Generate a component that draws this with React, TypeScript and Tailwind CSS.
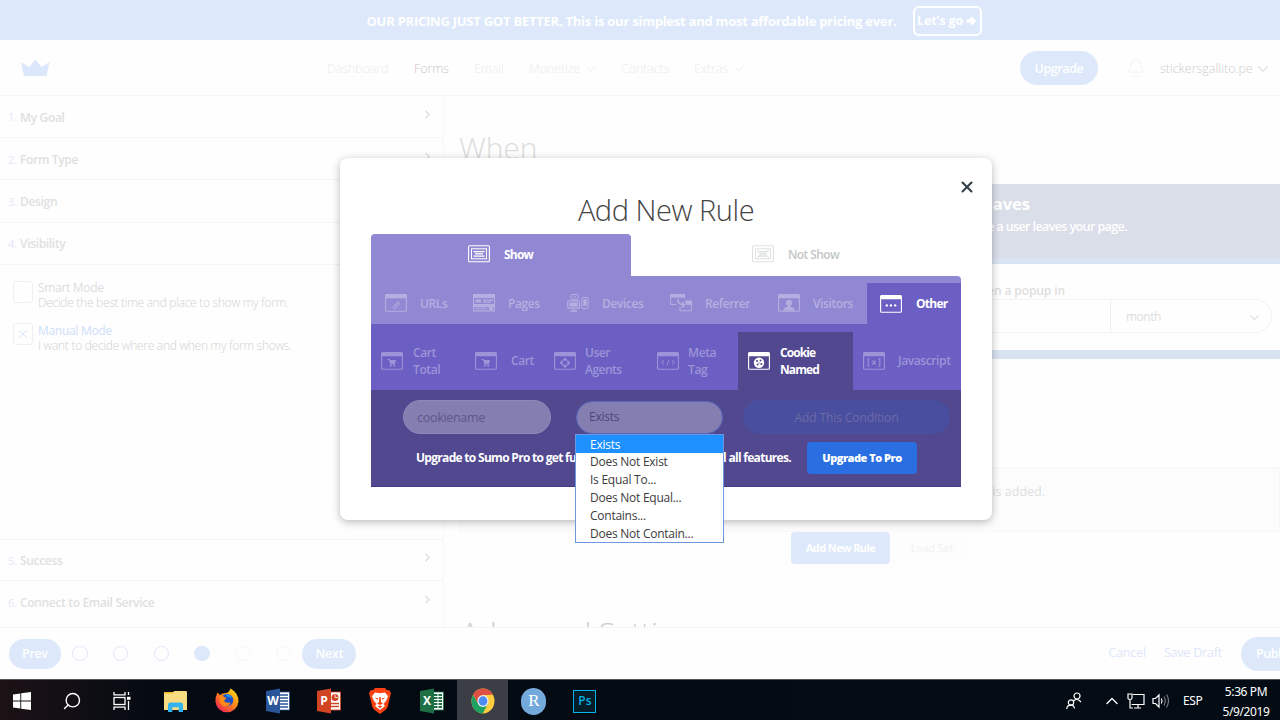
import React from "react";
import { ArrowBigRight, Bell, ChevronDown, ChevronRight, ChevronUp, Search, X } from "lucide-react";

type GlyphName = "link" | "cart" | "target" | "code" | "cookie" | "brackets" | "dots" | "person";

function Glyph({ name }: { name: GlyphName }) {
  switch (name) {
    case "link":
      return <path d="M8.5 12.5 L12 8.5 Q13.5 7 14.5 8.5 Q15 9.5 13.5 11 L11 14 Q9.5 15.5 8.5 14.2 Q7.8 13.4 8.5 12.5 M10 12.5 L13 9" fill="none" stroke="currentColor" strokeWidth=".9" />;
    case "cart":
      return (
        <g fill="currentColor">
          <path d="M6.5 7 H8.6 L9 8 H15 L14 12.2 H9.3 L8 8 H6.5 Z" />
          <circle cx="9.8" cy="13.6" r="1.1" />
          <circle cx="13.2" cy="13.6" r="1.1" />
        </g>
      );
    case "target":
      return (
        <g fill="currentColor">
          <path d="M8.4 8.2 L11 5.4 L13.6 8.2 L12.4 8.8 Q11 8 9.6 8.8 Z M8.4 13.2 L11 16 L13.6 13.2 L12.4 12.6 Q11 13.4 9.6 12.6 Z M8.2 8.2 L5.6 10.7 L8.2 13.2 L8.9 12 Q8.2 10.7 8.9 9.4 Z M13.8 8.2 L16.4 10.7 L13.8 13.2 L13.1 12 Q13.8 10.7 13.1 9.4 Z" />
        </g>
      );
    case "code":
      return <path d="M7 8.2 L4.7 10.3 L7 12.4 M15 8.2 L17.3 10.3 L15 12.4 M12.2 7.6 L9.8 13" fill="none" stroke="currentColor" strokeWidth="1" />;
    case "cookie":
      return (
        <g>
          <circle cx="11" cy="10.7" r="5.2" fill="currentColor" />
          <g fill="#51488f">
            <circle cx="9" cy="9" r="1" />
            <circle cx="12.6" cy="8.6" r="1" />
            <circle cx="9.6" cy="12.6" r="1" />
            <circle cx="13.3" cy="12" r="1" />
            <circle cx="11" cy="10.8" r=".6" />
          </g>
        </g>
      );
    case "brackets":
      return <path d="M6.7 6.8 H5.2 V14 H6.7 M15.3 6.8 H16.8 V14 H15.3 M9.3 8.6 L12.7 12.6 M12.7 8.6 L9.3 12.6" fill="none" stroke="currentColor" strokeWidth="1.1" />;
    case "dots":
      return (
        <g fill="currentColor">
          <circle cx="6.8" cy="10.4" r="1.2" />
          <circle cx="11" cy="10.4" r="1.2" />
          <circle cx="15.2" cy="10.4" r="1.2" />
        </g>
      );
    case "person":
      return (
        <g fill="currentColor">
          <circle cx="11" cy="8.8" r="3.1" />
          <path d="M5.2 16.5 Q5.4 13.8 9.6 12.8 L9.8 10.5 H12.2 L12.4 12.8 Q16.6 13.8 16.8 16.5 Z" />
        </g>
      );
  }
}

function WindowIcon({ name }: { name: GlyphName }) {
  return (
    <svg width="22" height="18" viewBox="0 0 22 18" className="shrink-0">
      <rect x=".6" y=".6" width="20.8" height="16.6" rx="1" fill="none" stroke="currentColor" strokeWidth="1.1" />
      <rect x=".5" y=".5" width="21" height="3.7" rx=".8" fill="currentColor" />
      <Glyph name={name} />
    </svg>
  );
}

function FormIcon({ crossed = false }: { crossed?: boolean }) {
  return (
    <svg width="22" height="18" viewBox="0 0 22 18" className="shrink-0" fill="none" stroke="currentColor">
      <rect x=".6" y=".8" width="20.8" height="16" rx="1" strokeWidth="1.1" />
      <rect x="3.5" y="3.8" width="15" height="10" strokeWidth="1" />
      <path d="M5.5 6.6 H16.5 M7 8.9 H15 M5.5 11.2 H16.5" strokeWidth="1.3" />
      {crossed && <path d="M5 5 L17 12.8 M17 5 L5 12.8" strokeWidth=".9" />}
    </svg>
  );
}

function PagesIcon() {
  return (
    <svg width="22" height="18" viewBox="0 0 22 18" className="shrink-0" fill="currentColor">
      <path d="M0 0 H22 V4 H0 Z M0 4 H1 V17.5 H0 Z M21 4 H22 V17.5 H21 Z" />
      <path d="M2.5 5.6 H8 V8.6 H2.5 Z M10 5.6 H20 V6.8 H10 Z M10 7.6 H18 V8.8 H10 Z M0 9.9 H22 V13.3 H0 Z M2 14.3 H14 V15.2 H2 Z M0 16.3 H22 V17.5 H0 Z M16 13 H20 V16 H16 Z" />
    </svg>
  );
}

function DevicesIcon() {
  return (
    <svg width="22" height="18" viewBox="0 0 22 18" className="shrink-0" fill="none" stroke="currentColor">
      <rect x="4" y=".5" width="7" height="5" rx=".5" />
      <path d="M6 3 H9" />
      <rect x=".8" y="6.8" width="11.6" height="7.4" rx="1" strokeWidth="1.2" />
      <rect x="2.5" y="8.4" width="8.2" height="4.2" fill="currentColor" stroke="none" />
      <path d="M3.4 17 H10 M6.7 14 V17" strokeWidth="1.4" />
      <rect x="14.8" y="3.5" width="6.4" height="11" rx="1" />
      <rect x="16.3" y="5.3" width="3.4" height="6.6" fill="currentColor" stroke="none" />
    </svg>
  );
}

function ReferrerIcon() {
  return (
    <svg width="22" height="18" viewBox="0 0 22 18" className="shrink-0" fill="none" stroke="currentColor">
      <path d="M6 10.5 H.6 V.6 H14.5 V4.5" />
      <path d="M.5 .2 H15 V3.6 H.5 Z" fill="currentColor" stroke="none" />
      <path d="M10 16.8 H21.4 V7 H15.5 M10 16.8 V13" />
      <path d="M15 7 H21.5 V11 H16.5 Z" fill="currentColor" stroke="none" />
      <path d="M8 5.2 Q7.5 10.5 14 10.8 M11.8 8 L14.6 10.8 L11.8 13.4" strokeWidth="1.6" />
    </svg>
  );
}

const STEPS_TOP = ["My Goal", "Form Type", "Design", "Visibility"];
const STEPS_BOTTOM = ["Success", "Connect to Email Service"];

function Step({ index, label, className, arrow }: { index: number; label: string; className: string; arrow: boolean }) {
  return (
    <div className={`flex items-center border-b border-[#f5f5f6] pl-2 pr-[9px] text-[12px] ${className}`}>
      <span className="w-3 pt-0.5 text-[11px] text-[#e6e6f7]">{index}.</span>
      <span className="flex-1 pt-0.5 font-semibold tracking-[-0.33px] text-[#dfe1e1]">{label}</span>
      {arrow && <ChevronRight size={13} strokeWidth={2.5} className="mb-[5px] text-[#dedfdf]" />}
    </div>
  );
}

function Mode({ title, text, checked }: { title: string; text: string; checked: boolean }) {
  return (
    <div className="flex h-[42.5px] pl-[13px]">
      <div className="mr-[5px] flex h-[22px] w-5 items-center justify-center rounded-[3px] border border-[#f0f0f2]">
        {checked && <X size={14} strokeWidth={1.6} className="text-[#d5e3f8]" />}
      </div>
      <div className="text-[12px] leading-[15px] text-[#dcdcdc] -mt-[0.5px]">
        <div className={checked ? "tracking-[-0.3px] text-[#cfe0f9]" : "tracking-[-0.3px]"}>{title}</div>
        <div className="whitespace-nowrap font-light tracking-[-0.28px] text-[#d2d2d2]">{text}</div>
      </div>
    </div>
  );
}

function Sidebar() {
  return (
    <aside className="flex w-[444px] shrink-0 flex-col border-r border-[#f7f7f7]">
      {STEPS_TOP.map((label, i) => (
        <Step key={label} index={i + 1} label={label} arrow={i < 3} className="h-[42.2px]" />
      ))}
      <div className="flex-1 border-b border-[#f5f5f6] pt-4">
        <Mode title="Smart Mode" text="Decide the best time and place to show my form." checked={false} />
        <Mode title="Manual Mode" text="I want to decide where and when my form shows." checked />
      </div>
      <Step index={5} label={STEPS_BOTTOM[0]} arrow className="h-[41px]" />
      <Step index={6} label={STEPS_BOTTOM[1]} arrow className="h-[46px] border-b-0 pb-1" />
    </aside>
  );
}

function Content() {
  return (
    <main className="flex min-w-0 flex-1 flex-col overflow-hidden">
      <h1 className="mt-[30px] h-[58px] shrink-0 pl-[15px] text-[30px] font-light leading-[44px] tracking-[-0.1px] text-[#dcdcdc]">When</h1>
      <section className="ml-[15px] flex h-[80px] shrink-0 flex-col border-b-[6px] border-[#dae3f1] bg-[#dadee9] text-white">
        <div className="w-[571px] pt-2 text-right text-[16.5px] font-bold leading-6">When Visitor Leaves</div>
        <div className="w-[668px] text-right text-[12.5px] font-semibold leading-[21px] tracking-[-0.6px]">Show right before a user leaves your page.</div>
      </section>
      <section className="ml-[15px] flex h-[95px] shrink-0 flex-col border-b-[9px] border-[#d9e2f0] pt-[17px]">
        <div className="w-[606px] pt-px text-right text-[12px] font-semibold leading-[17px] tracking-[-0.1px] text-[#dedede]">Frequency between when a popup in</div>
        <div className="mr-2 flex h-[34px] shrink-0 overflow-hidden rounded-full border border-[#f3f3f3]">
          <div className="w-[651px] border-r border-[#eeeeee]" />
          <div className="flex flex-1 items-center justify-between pl-[15px] pr-[9px] pt-0.5 text-[12px] tracking-[-0.5px] text-[#dddddd]">
            month
            <ChevronDown size={15} strokeWidth={1.8} />
          </div>
        </div>
      </section>
      <section className="ml-[15px] mt-[108px] flex h-[65px] shrink-0 border border-[#f7f7f7] bg-[#fcfcfc] pt-[15px]">
        <div className="w-[585px] text-right text-[12.5px] leading-[17px] text-[#dcdfdd]">Nothing is shown until a rule is added.</div>
      </section>
      <div className="ml-[347px] flex h-8 shrink-0 text-[11px] font-bold tracking-[-0.6px]">
        <div className="flex w-[99px] items-center justify-center rounded-sm bg-[#dde9fa] text-white">Add New Rule</div>
        <div className="ml-[1px] flex w-[78px] items-center justify-center bg-[#fdfdfd] pl-1 font-normal tracking-[-0.2px] text-[#f2f2f2]">Load Set</div>
      </div>
      <h2 className="mt-[47px] shrink-0 whitespace-nowrap pl-[17px] text-[30px] font-light leading-[44px] tracking-[-0.2px] text-[#cccccc]">Advanced Settings</h2>
    </main>
  );
}

function Header() {
  return (
    <header className="flex h-14 shrink-0 items-center border-b border-[#f5f5f5] text-[12.5px] text-[#ececec]">
      <svg width="30" height="18" viewBox="0 0 30 18" className="ml-5 shrink-0" fill="#dbe7fa">
        <path d="M1 3 L9 8 L15.5 .5 L21.5 8 L29.5 3 L26.5 17 H4 Z" />
      </svg>
      <nav className="ml-[277px] flex items-center whitespace-nowrap pt-[3px] font-light tracking-[-0.1px]">
        <span className="w-[87px]">Dashboard</span>
        <span className="w-[60px] text-[#c9c9c9]">Forms</span>
        <span className="w-[55px]">Email</span>
        <span className="flex w-[92px] items-center gap-[3px]">Monetize <ChevronDown size={16} strokeWidth={1.4} /></span>
        <span className="w-[73px]">Contacts</span>
        <span className="flex w-[60px] items-center gap-[3px]">Extras <ChevronDown size={16} strokeWidth={1.4} /></span>
      </nav>
      <div className="ml-auto flex h-[34px] w-[78px] items-center justify-center rounded-full bg-[#dde9fa] pt-[3px] text-[12.5px] font-semibold tracking-[-0.4px] text-white">Upgrade</div>
      <Bell size={20} strokeWidth={1.1} className="ml-7 text-[#f1f1f1]" />
      <span className="ml-[14px] w-[94px] whitespace-nowrap pt-[3px] font-light text-[#cfcfcf]">stickersgallito.pe</span>
      <ChevronDown size={18} strokeWidth={1.6} className="mr-2 mt-[3px] text-[#e0e0e0]" />
    </header>
  );
}

function Footer() {
  return (
    <footer className="flex h-[52px] shrink-0 items-center border-t border-[#f5f5f5] text-[12.5px] tracking-[-0.2px]">
      <div className="ml-[9px] mr-[11px] flex h-[30px] w-[52px] items-center justify-center rounded-full bg-[#dde9fa] pt-0.5 font-semibold text-white">Prev</div>
      <div className="flex gap-[25.3px]">
        {["done", "done", "done", "current", "next", "next"].map((state, i) => (
          <div
            key={i}
            className={
              state === "current"
                ? "size-[15.5px] rounded-full bg-[#dde9fa]"
                : state === "done"
                  ? "size-[15.5px] rounded-full border border-[#dfe6fa]"
                  : "size-[15.5px] rounded-full border border-[#f5f6fa]"
            }
          />
        ))}
      </div>
      <div className="ml-[11px] flex h-[30px] w-[54px] items-center justify-center rounded-full bg-[#dde9fa] pt-0.5 font-semibold text-white">Next</div>
      <span className="ml-auto mr-[18px] text-[#dde8fa]">Cancel</span>
      <span className="mr-[19px] text-[#dde8fa]">Save Draft</span>
      <div className="flex h-[34px] w-[39px] items-center overflow-hidden rounded-l-full bg-[#dde9fa] pl-[15px] pt-0.5 font-semibold tracking-[-0.5px] text-white">Publish</div>
    </footer>
  );
}

const CATEGORIES = [
  { label: "URLs", icon: <WindowIcon name="link" />, width: "w-[88px]" },
  { label: "Pages", icon: <PagesIcon />, width: "w-[94px]" },
  { label: "Devices", icon: <DevicesIcon />, width: "w-[103px]" },
  { label: "Referrer", icon: <ReferrerIcon />, width: "w-[108px]" },
  { label: "Visitors", icon: <WindowIcon name="person" />, width: "w-[103px]" },
];

function SubTab({ icon, label, className, labelClass }: { icon: GlyphName; label: string; className: string; labelClass: string }) {
  return (
    <div className={`flex items-center ${className}`}>
      <WindowIcon name={icon} />
      <span className={`whitespace-pre-line leading-[17.5px] ${labelClass}`}>{label}</span>
    </div>
  );
}

const OPTIONS = ["Exists", "Does Not Exist", "Is Equal To...", "Does Not Equal...", "Contains...", "Does Not Contain..."];

function RuleModal() {
  return (
    <div className="absolute left-[340px] top-[158px] h-[362px] w-[652px] rounded-lg bg-white shadow-[0_2px_8px_rgba(0,0,0,0.28)]">
      <div className="flex h-[76px] justify-center pt-[31px]">
        <h2 className="text-[29px] font-light leading-[42px] tracking-[-0.45px] text-[#444444]">Add New Rule</h2>
        <X size={18} strokeWidth={2.8} className="absolute right-4 top-[19.5px] text-[#36424a]" />
      </div>
      <div className="mx-[31px] flex h-[253px] flex-col text-[12px] font-semibold tracking-[-0.4px]">
        <div className="flex h-[42px] shrink-0">
          <div className="flex w-[260px] items-center rounded-t-sm bg-[#9088d2] pb-0.5 pl-[97px] text-white">
            <FormIcon />
            <span className="ml-[14px] pt-0.5 font-bold tracking-[-0.8px]">Show</span>
          </div>
          <div className="flex items-center pb-0.5 pl-[121px] text-[#c4c7c7]">
            <span className="flex text-[#dfe1e1]"><FormIcon crossed /></span>
            <span className="ml-[14px] pt-0.5 tracking-[-0.6px]">Not Show</span>
          </div>
        </div>
        <div className="flex h-[48px] shrink-0 rounded-tr-sm bg-[#9088d2] text-[#b5afe1]">
          {CATEGORIES.map((c) => (
            <div key={c.label} className={`flex items-center gap-[13px] pl-[14px] pt-[6px] ${c.width}`}>
              {c.icon}
              <span className="pt-0.5">{c.label}</span>
            </div>
          ))}
          <div className="mt-[7px] flex w-[94px] items-center gap-[14px] bg-[#6b5fc4] pl-[13px] text-white">
            <WindowIcon name="dots" />
            <span className="font-bold tracking-[-0.75px]">Other</span>
          </div>
        </div>
        <div className="flex h-[66px] shrink-0 bg-[#6b5fc4] text-[#9c94d8]">
          <SubTab icon="cart" label={"Cart\nTotal"} className="w-[90px] pl-[10px] pt-2" labelClass="ml-[10px]" />
          <SubTab icon="cart" label="Cart" className="w-[83px] pl-[14px] pt-2" labelClass="ml-[14px]" />
          <SubTab icon="target" label={"User\nAgents"} className="w-[103px] pl-[10px] pt-2 tracking-[-0.5px]" labelClass="ml-[9px]" />
          <SubTab icon="code" label={"Meta\nTag"} className="w-[91px] pl-[10px] pt-2" labelClass="ml-[9px]" />
          <SubTab icon="cookie" label={"Cookie\nNamed"} className="mt-2 w-[115px] bg-[#51488f] pl-[10px] font-bold tracking-[-0.9px] text-white" labelClass="ml-[10px]" />
          <SubTab icon="brackets" label="Javascript" className="w-[108px] pl-[10px] pt-2" labelClass="ml-[13px]" />
        </div>
        <div className="flex-1 border-b border-[#44388a] bg-[#51488f]">
          <div className="flex items-center pt-[10px] font-normal tracking-normal">
            <div className="ml-[32px] flex h-[34px] w-[148px] items-center rounded-full border border-[#8f88b8] bg-[#857eb1] pl-[13px] pt-0.5 text-[12.5px] tracking-[-0.3px] text-[#5d5889]">cookiename</div>
            <div className="relative ml-[25px] flex h-[33px] w-[147px] items-center rounded-full border border-[#5667bd] bg-[#857eb1] pl-3 text-[12px] tracking-[-0.25px] text-[#4d4879]">
              Exists
              <ul className="absolute -left-[2px] top-[32px] h-[109.5px] w-[149px] border border-[#6c97dc] bg-white text-[12px] text-[#3c3c3c]">
                {OPTIONS.map((option, i) => (
                  <li key={option} className={i === 0 ? "h-[18.5px] bg-[#1e90ff] pl-[14px] leading-[19px] text-white" : "h-[17.9px] pl-[14px] leading-[17.9px]"}>
                    {option}
                  </li>
                ))}
              </ul>
            </div>
            <div className="ml-[20px] flex h-[34px] w-[207px] items-center justify-center rounded-full bg-[#494e9e] pt-0.5 text-[12px] tracking-[-0.1px] text-[#6d6ba9]">Add This Condition</div>
          </div>
          <div className="mt-[8px] flex items-center pl-[45px] text-white">
            <p className="flex w-[375px] justify-between whitespace-nowrap text-[12px] font-bold tracking-[-0.7px]">
              <span>Upgrade to Sumo Pro to get full</span>
              <span>and all features.</span>
            </p>
            <div className="ml-4 flex h-[32px] w-[110px] items-center justify-center rounded-sm bg-[#2a6fe1] text-[11px] font-extrabold tracking-[-0.5px]">Upgrade To Pro</div>
          </div>
        </div>
      </div>
    </div>
  );
}

function OfficeIcon({ letter, color, kind }: { letter: string; color: string; kind: "lines" | "chart" | "grid" }) {
  return (
    <svg width="24" height="26" viewBox="0 0 24 26">
      <rect x="11" y="4" width="12.5" height="18" fill="#fff" stroke={color} strokeWidth=".8" />
      {kind === "lines" && <path d="M13 7 H22 M13 10 H22 M13 13 H22 M13 16 H22 M13 19 H22" stroke={color} strokeWidth="1.3" />}
      {kind === "grid" && <path d="M14 7 H22 M14 10 H22 M14 13 H22 M14 16 H22 M14 19 H22" stroke={color} strokeWidth="1.8" strokeDasharray="3.5 1" />}
      {kind === "chart" && (
        <g stroke={color} fill="none" strokeWidth="1.4">
          <circle cx="18" cy="9.5" r="2.8" fill={color} />
          <path d="M18 9.5 V6.5 M18 9.5 H21" stroke="#fff" strokeWidth=".8" />
          <path d="M14 15.5 H22 M14 18.5 H22" />
        </g>
      )}
      <path d="M0 3 L14 .5 V25.5 L0 23 Z" fill={color} />
      <text x="7" y="17.4" textAnchor="middle" fontSize="12" fontWeight="700" fill="#fff" fontFamily="Open Sans, sans-serif">{letter}</text>
    </svg>
  );
}

function FirefoxIcon() {
  return (
    <svg width="24" height="26" viewBox="0 0 24 26">
      <defs>
        <linearGradient id="fx" x1=".9" y1="0" x2=".1" y2="1">
          <stop offset="0" stopColor="#ffe226" />
          <stop offset=".45" stopColor="#ff8a16" />
          <stop offset="1" stopColor="#f0175c" />
        </linearGradient>
      </defs>
      <path d="M2.5 4.5 L5 7 Q8 4.5 12 5 Q14.5 3.5 15.5 .5 Q23.5 5 23.5 13.5 A11.6 11.8 0 0 1 .4 13.5 Q.3 8.5 2.5 4.5 Z" fill="url(#fx)" />
      <circle cx="12" cy="12.2" r="6.2" fill="#1b50c8" />
      <path d="M4.5 8 Q7 6.5 9.5 9 L11.5 10.2 Q10.8 11.5 9.5 11.8 Q9.2 13 9.6 13.6 Q12 15.8 15.5 14.2 Q14.5 18.5 10.5 18.6 Q5 17.5 4.5 12.5 Z" fill="#ff8a1a" />
      <path d="M10.5 6.6 Q15.5 5.6 17 10.5 Q14.5 8.2 12.6 9 Z" fill="#17a5ee" />
    </svg>
  );
}

function BraveIcon() {
  return (
    <svg width="22" height="26" viewBox="0 0 22 26">
      <path d="M6 0 H16 L18 2.3 L20.5 2.3 L22 5.5 L21.2 8 L18.8 18.5 Q18 20.8 16 22.2 L11 26 L6 22.2 Q4 20.8 3.2 18.5 L.8 8 L0 5.5 L1.5 2.3 L4 2.3 Z" fill="#fb4214" />
      <path d="M6 4.5 L11 5.3 L16 4.5 L19 8.3 L17.3 12.5 L14.5 16 L16 18 L11 22 L6 18 L7.5 16 L4.7 12.5 L3 8.3 Z" fill="#fff" />
      <path d="M5.5 9.5 L9.5 10.5 L8.5 11.8 Z M16.5 9.5 L12.5 10.5 L13.5 11.8 Z M10.3 9 H11.7 L12 14 L14 15.4 L11 17 L8 15.4 L10 14 Z M8.6 18.3 L11 17.6 L13.4 18.3 L11 20 Z" fill="#fb4214" />
    </svg>
  );
}

function ChromeIcon() {
  return (
    <svg width="24" height="26" viewBox="0 0 24 24" preserveAspectRatio="none">
      <circle cx="12" cy="12" r="11.5" fill="#ffcd40" />
      <path d="M2 6.2 A11.5 11.5 0 0 1 22 6.3 L12 6.5 L7.2 14.7 Z" fill="#dd5144" />
      <path d="M2 6.2 A11.5 11.5 0 0 0 11.8 23.5 L16.8 14.6 L7.2 14.7 Z" fill="#1da261" />
      <circle cx="12" cy="12" r="5.6" fill="#f1f1f1" />
      <circle cx="12" cy="12" r="4.4" fill="#4c8bf5" />
    </svg>
  );
}

function Taskbar() {
  const icons = [
    <Search key="s" size={20} strokeWidth={1.7} className="-ml-[3px] -scale-x-100" />,
    <svg key="t" width="18" height="18" viewBox="0 0 18 18" fill="none" stroke="#fff" strokeWidth="1.3" className="-ml-[5px]">
      <path d="M1 0 V2.8 H12 V0 M1 18 V15.2 H12 V18 M15.5 0 V3 M15.5 9 V18" />
      <rect x="1" y="5.5" width="11" height="7" />
      <path d="M14 6.3 H17.5" strokeWidth="3" />
    </svg>,
    <svg key="f" width="23" height="21" viewBox="0 0 23 21">
      <path d="M0 1.5 H8.5 L10.5 0 H22 L23 1 V19 H0 Z" fill="#f9dc82" />
      <path d="M0 1 H9 V2.5 H0 Z" fill="#f2b92c" />
      <path d="M4 21 V14 Q4 11.5 6 11.5 H17 Q19 11.5 19 14 V21 H14.7 V16.3 H8.3 V21 Z" fill="#35b3ee" />
    </svg>,
    <FirefoxIcon key="x" />,
    <OfficeIcon key="w" letter="W" color="#2a5699" kind="lines" />,
    <OfficeIcon key="p" letter="P" color="#d14424" kind="chart" />,
    <BraveIcon key="b" />,
    <OfficeIcon key="e" letter="X" color="#1e7145" kind="grid" />,
    <ChromeIcon key="c" />,
    <div key="r" className="flex h-[27px] w-[25px] items-center justify-center rounded-full bg-[#74a9dc] font-['Liberation_Serif',serif] text-[17px] text-white">R</div>,
    <div key="ps" className="flex size-[23px] items-center justify-center border-[1.5px] border-[#05b4e6] bg-[#021c28] text-[12px] font-semibold leading-none text-[#05b4e6]">Ps</div>,
  ];
  return (
    <div className="flex h-[41px] shrink-0 items-center border-t border-[#55585c] bg-gradient-to-r from-[#1c1216] via-[#050a12] via-12% to-[#030c15] text-white">
      <div className="flex w-[48px] shrink-0 justify-center pr-1 pt-[2px]">
        <svg width="18" height="18" viewBox="0 0 18 18" fill="#fff">
          <path d="M0 2.5 L7.3 1.4 V8.5 H0 Z M8.2 1.3 L18 0 V8.5 H8.2 Z M0 9.4 H7.3 V16.6 L0 15.5 Z M8.2 9.4 H18 V18 L8.2 16.7 Z" />
        </svg>
      </div>
      {icons.map((icon, i) => (
        <div key={i} className={`flex h-full w-[51.15px] shrink-0 items-center justify-center pt-[2px] ${i === 8 ? "bg-[#3b3e44]" : ""}`}>
          {icon}
        </div>
      ))}
      <div className="ml-auto flex shrink-0 items-center pt-[2px] font-['Noto_Sans',sans-serif] text-[12px] tracking-[-0.4px]">
        <svg width="16" height="18" viewBox="0 0 16 18" fill="none" stroke="#fff" strokeWidth="1.2" className="mr-[20px]">
          <circle cx="11" cy="4" r="3" />
          <path d="M7.5 9 Q11 5.5 15 10" />
          <circle cx="5" cy="10.5" r="2.7" />
          <path d="M.7 17 Q1 13.2 5 13.2 Q8 13.2 8.5 16.5" />
        </svg>
        <ChevronUp size={20} strokeWidth={1.6} className="mr-[5.5px]" />
        <svg width="18" height="16" viewBox="0 0 18 16" fill="none" stroke="#fff" strokeWidth="1.2" className="mr-[7px]">
          <path d="M6 1.5 H17 V11.5 H4.5 M11 11.5 V15 M7 15 H14 M3 7 V15 H6" />
          <path d="M1 1 H5 V5 Q5 6.5 3 6.5 Q1 6.5 1 5 Z" />
        </svg>
        <svg width="18" height="16" viewBox="0 0 18 16" fill="none" stroke="#fff" strokeWidth="1.2" className="mr-[13px]">
          <path d="M1 5.5 H3.5 L7 2 V14 L3.5 10.5 H1 Z M9.3 5.5 Q10.8 8 9.3 10.5" />
          <path d="M12 3.5 Q14.5 8 12 12.5 M14.5 1.5 Q18.5 8 14.5 14.5" stroke="#777" />
        </svg>
        <span className="w-[29px]">ESP</span>
        <div className="w-[68px] whitespace-nowrap pt-[2px] text-center leading-[20px]">
          <div>5:36 PM</div>
          <div>5/9/2019</div>
        </div>
      </div>
    </div>
  );
}

export default function App() {
  return (
    <div className="relative flex h-[720px] w-[1280px] flex-col overflow-hidden bg-[#fefefe] font-['Open_Sans','Noto_Sans',sans-serif]">
      <div className="flex h-10 shrink-0 items-center justify-center bg-[#dde9fa] pl-[68px] text-[13px] font-bold text-white">
        <span className="whitespace-nowrap pt-[3px] tracking-[-0.24px]">OUR PRICING JUST GOT BETTER. This is our simplest and most affordable pricing ever.</span>
        <span className="ml-4 mt-[1px] flex h-[30px] w-[69px] items-center justify-center gap-0.5 whitespace-nowrap rounded-md border-2 border-white pt-px text-[12.5px] tracking-[-0.2px]">
          Let's go <ArrowBigRight size={12} fill="white" />
        </span>
      </div>
      <Header />
      <div className="flex min-h-0 flex-1">
        <Sidebar />
        <Content />
      </div>
      <Footer />
      <Taskbar />
      <RuleModal />
    </div>
  );
}
